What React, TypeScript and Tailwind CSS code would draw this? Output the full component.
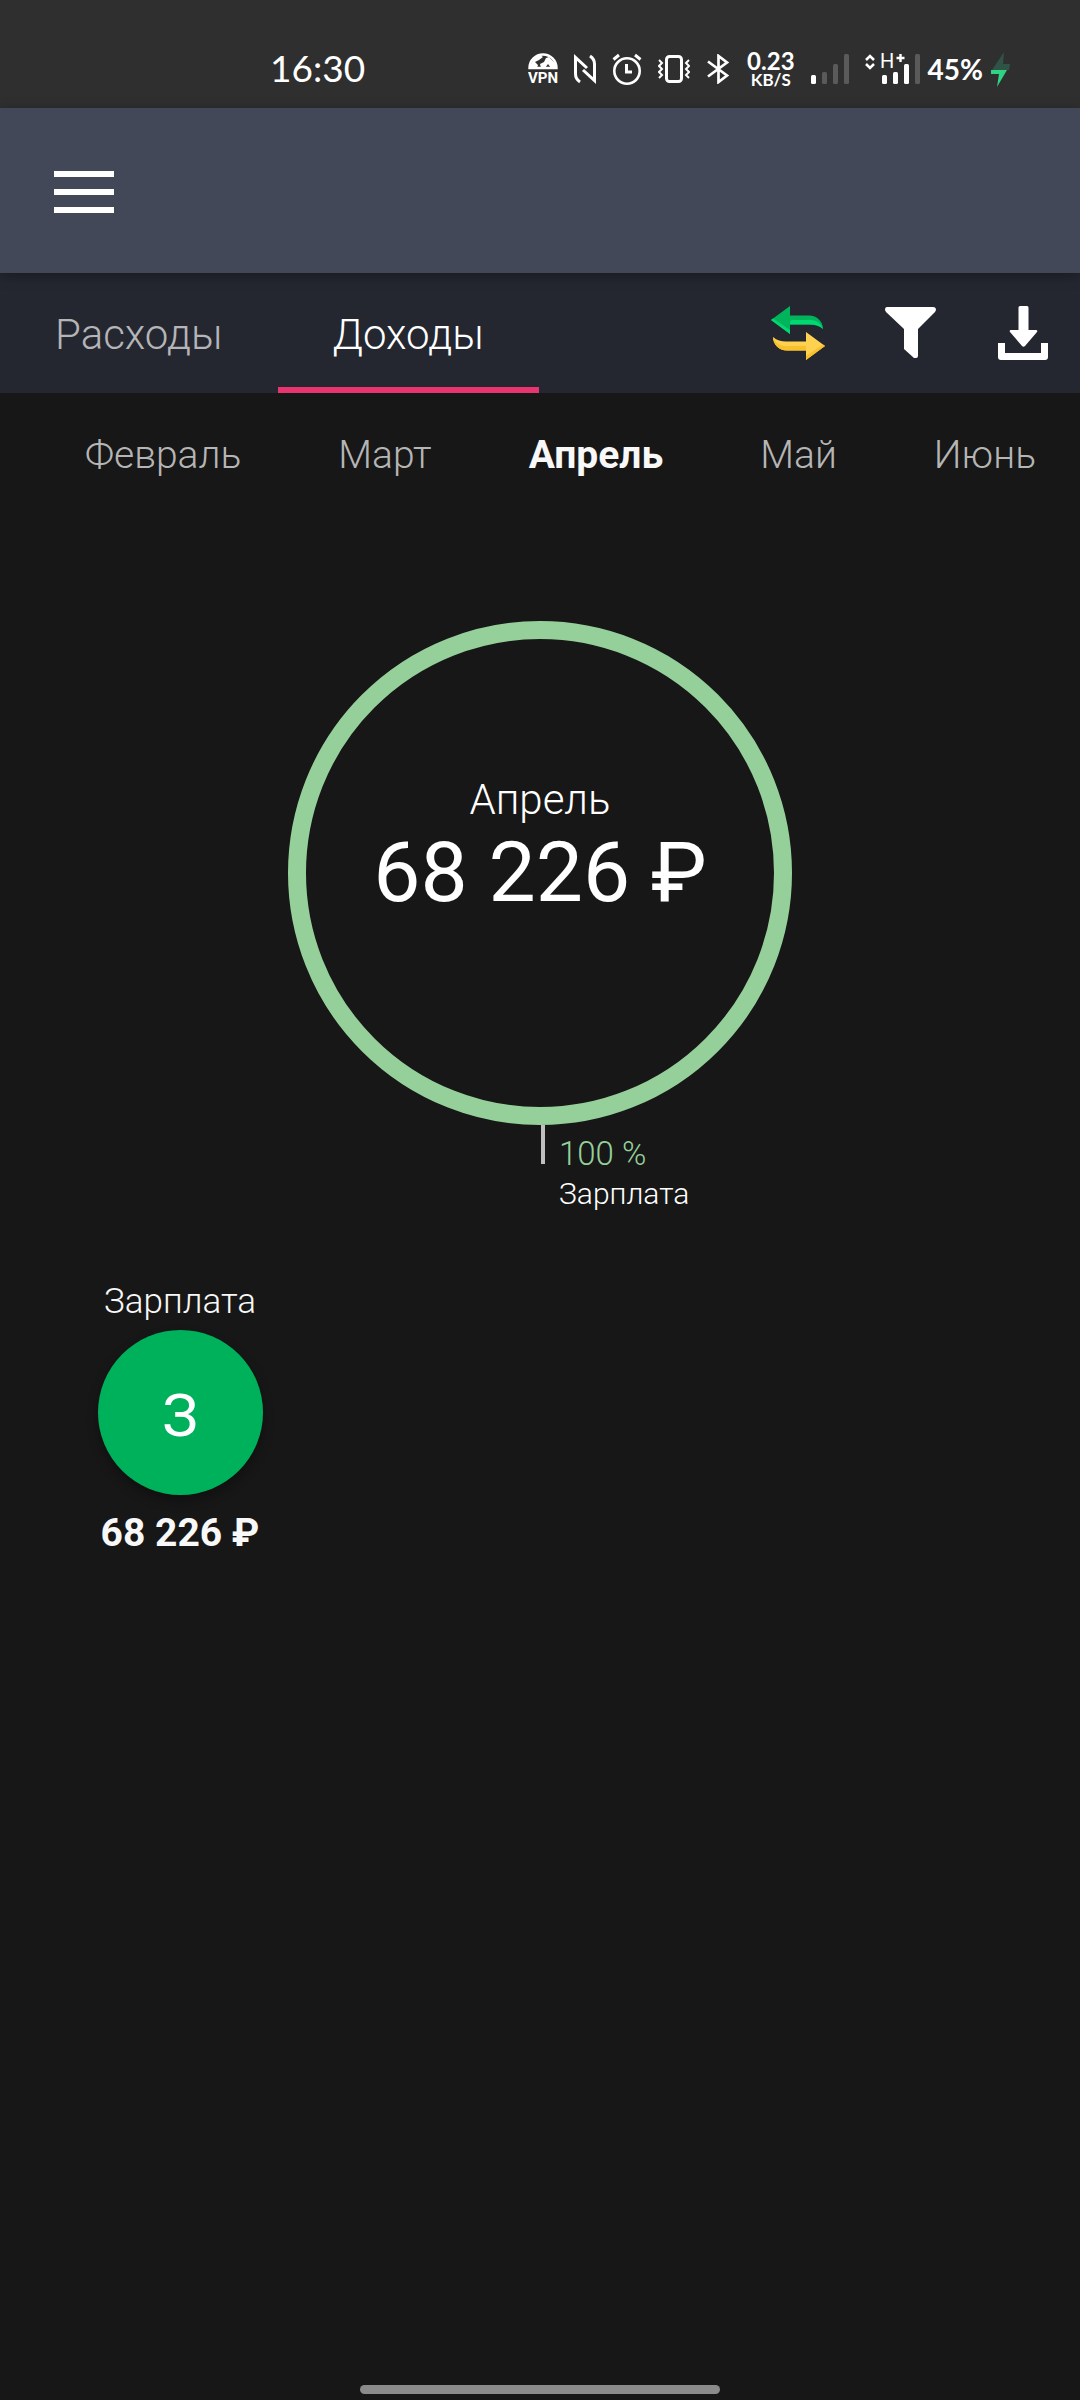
import { useState } from "react";
import clsx from "clsx";

const TABS = ["Расходы", "Доходы"];
const MONTHS = ["Февраль", "Март", "Апрель", "Май", "Июнь"];
const CATEGORIES = [{ name: "Зарплата", letter: "З", amount: "68 226 ₽" }];

function SignalBars({ active }: { active: number }) {
  const bars = [
    { x: 0, h: 9 },
    { x: 11, h: 12 },
    { x: 22, h: 20 },
    { x: 33, h: 30 },
  ];
  return (
    <>
      {bars.map((b, i) => (
        <rect key={b.x} x={b.x} y={30 - b.h} width="5" height={b.h} rx="1.5" fill={i < active ? "#fff" : "#5a5a5a"} />
      ))}
    </>
  );
}

function StatusBar() {
  return (
    <div className="flex h-[108px] items-center justify-between bg-[#2f2f2f] pt-[30px] pr-[70px] pl-[25%] font-normal text-white">
      <span className="pb-0.5 font-['Lato'] text-[37px] leading-10">16:30</span>

      <div className="flex items-center gap-4">
        {/* VPN */}
        <svg width="30" height="38" viewBox="0 -3 30 38" fill="none">
          <path d="M1.5 15a13.5 13.5 0 0 1 27 0z" stroke="#fff" strokeWidth="2.4" />
          <path d="M2 15C3 9 7 3 12 2l3 2-4 3-4 2 3 3-1 3zM13 15l-1-4 4-2 2-4 3-1 6 6 1 5h-5l-3-4-3 4z" fill="#fff" />
          <text x="15" y="30" textAnchor="middle" fill="#fff" fontFamily="Roboto" fontWeight="700" fontSize="15">VPN</text>
        </svg>
        {/* NFC */}
        <svg width="22" height="30" viewBox="0 0 22 30" fill="none" stroke="#fff" strokeWidth="3">
          <path d="M6 28Q1.500 25 1.500 20V3.500L13 14M16 2q4.500 3 4.500 8v16.500L9 16" />
        </svg>
        {/* Alarm */}
        <svg width="30" height="32" viewBox="0 0 30 32" fill="none" stroke="#fff" strokeWidth="2.600">
          <circle cx="15" cy="18" r="12.700" />
          <path d="M1.500 6.500 7 2M28.500 6.500 23 2" strokeWidth="3" />
          <path d="M14.500 11v8h5.500" strokeWidth="3" />
        </svg>
        {/* Vibration */}
        <svg width="32" height="30" viewBox="0 0 32 30" fill="none" stroke="#fff">
          <rect x="8.500" y="2.500" width="15" height="25" rx="3" strokeWidth="3" />
          <path d="m1 6 3 3-3 3 3 3-3 3 3 3-3 3M31 6l-3 3 3 3-3 3 3 3-3 3 3 3" strokeWidth="2" />
        </svg>
        {/* Bluetooth */}
        <svg width="25" height="30" viewBox="0 0 25 30" fill="none" stroke="#fff" strokeWidth="2.700">
          <path d="m2 7.500 19 14-8.500 6.500V2L21 8.500l-19 14" />
        </svg>
        <div className="flex flex-col items-center font-['Lato'] font-bold">
          <span className="text-[24px] leading-5">0.23</span>
          <span className="text-[17px] leading-[17px]">KB/S</span>
        </div>
        <svg width="38" height="30" viewBox="0 0 38 30">
          <SignalBars active={1} />
        </svg>
        <div className="flex items-center gap-2">
          <svg width="55" height="42" viewBox="0 -6 55 42">
            <path d="m1 6 4-4 4 4M1 10l4 4 4-4" fill="none" stroke="#fff" strokeWidth="2.500" />
            <g transform="translate(17 0)">
              <SignalBars active={3} />
            </g>
            <text x="15" y="14" fill="#fff" fontFamily="Roboto" fontSize="20">H</text>
            <path d="M35.500 0v8M31.500 4h8" stroke="#fff" strokeWidth="2.400" />
          </svg>
          <span className="font-['Lato'] text-[28px] leading-8 font-bold">45%</span>
          <svg width="19" height="35" viewBox="0 0 19 35">
            <path d="M13 0 1 18h17l1-6h-7z" fill="#2f5345" />
            <path d="M0 18h16L6 35l2-13H0z" fill="#2fd383" />
          </svg>
        </div>
      </div>
    </div>
  );
}

function TransferIcon() {
  return (
    <svg width="54" height="54" viewBox="0 0 54 54">
      <path d="M0 14 19 0v9.500h19c8 0 14 6 14 13.500-4-3.500-8-4.500-13-4.500H19V28z" fill="#00b45c" />
      <path d="m0 14 2-1.500L19 24v4zM19 18.500V16q0-2 2-2h19c6 0 10 4 12 9-4-3.500-8-4.500-13-4.500z" fill="#00d872" />
      <path d="M54 40 35 54v-9.500H16C8 44.500 2 38.500 2 31c4 3.500 8 4.500 13 4.500h20V26z" fill="#ffd150" />
      <path d="m54 40-19 14v-4l17-11.500zM35 44.500H16C8 44.500 2 38.500 2 31c2 5 6 9 12 9h21z" fill="#f8c12c" />
    </svg>
  );
}

function FilterIcon() {
  return (
    <svg width="54" height="54" viewBox="0 0 54 54" fill="#fff">
      <path d="M3 1h46q3 0 3 3l-1 2-17 17v27q0 2-2 2h-2L20 43V23L2 6 1 4q0-3 2-3z" />
    </svg>
  );
}

function DownloadIcon() {
  return (
    <svg width="54" height="54" viewBox="0 0 54 54" fill="#fff">
      <path d="M23 0h7q1.500 0 1.500 1.500V24H39q2 0 1 2L28 40q-1.500 1.500-3 0L13 26q-1-2 1-2h7.500V1.500Q21.500 0 23 0z" />
      <path d="M1 37h7v10h36V37h7v14q0 3-3 3H4q-3 0-3-3z" />
    </svg>
  );
}

export default function App() {
  const [tab, setTab] = useState("Доходы");
  const [month, setMonth] = useState("Апрель");

  return (
    <div className="flex min-h-screen flex-col overflow-hidden bg-[#171717] font-['Roboto',sans-serif] font-light text-white">
      <StatusBar />

      <header className="relative z-10 flex h-[165px] items-center bg-[#424858] px-[54px] shadow-[0_3px_12px_rgba(0,0,0,0.3)]">
        <button aria-label="Меню" className="flex flex-col gap-3 pt-0.5">
          <span className="h-1.5 w-[60px] bg-white" />
          <span className="h-1.5 w-[60px] bg-white" />
          <span className="h-1.5 w-[60px] bg-white" />
        </button>
      </header>

      {/* Tabs and actions */}
      <div className="flex h-[120px] items-stretch justify-between bg-[#242730]">
        <nav className="flex">
          {TABS.map((t) => (
            <button
              key={t}
              onClick={() => setTab(t)}
              className={clsx(
                "px-[55px] pt-1 text-[42px] leading-[48px]",
                t === tab ? "text-white shadow-[inset_0_-6px_0_#e8346f]" : "text-[#b5b5b8]"
              )}
            >
              {t}
            </button>
          ))}
        </nav>
        <div className="flex items-center gap-[59px] pr-[29px]">
          <button aria-label="Перевод"><TransferIcon /></button>
          <button aria-label="Фильтр"><FilterIcon /></button>
          <button aria-label="Скачать"><DownloadIcon /></button>
        </div>
      </div>

      {/* Months */}
      <div className="flex gap-[97px] py-10 pl-[85px] text-[39px] leading-[44px]">
        {MONTHS.map((m) => (
          <button
            key={m}
            onClick={() => setMonth(m)}
            className={m === month ? "font-bold text-[#f8f8f8]" : "text-[#b5b5b5]"}
          >
            {m}
          </button>
        ))}
      </div>

      {/* Chart */}
      <section className="mt-[104px]">
        <div className="mx-auto flex size-[504px] flex-col items-center justify-center rounded-full border-[18px] border-[#95d09a] pb-12">
          <span className="text-[42px] leading-[48px]">{month}</span>
          <span className="text-[84px] leading-[98px] font-normal whitespace-nowrap">68 226 ₽</span>
        </div>
        <div className="flex pl-[50%]">
          <span className="ml-px h-[39px] w-1 bg-[#bfbfc1]" />
          <div className="ml-3.5 flex flex-col pt-[9px] leading-10">
            <span className="text-[33px] text-[#95d09a]">100 %</span>
            <span className="text-[30px]">Зарплата</span>
          </div>
        </div>
      </section>

      {/* Categories */}
      <section className="mt-[66px] grid grid-cols-3">
        {CATEGORIES.map((c) => (
          <button key={c.name} className="flex flex-col items-center">
            <span className="text-[35px] leading-[44px] text-[#f8f8f8]">{c.name}</span>
            <span className="mt-1.5 flex size-[165px] items-center justify-center rounded-full bg-[#00b15c] pt-1.5 text-[60px] font-normal shadow-[0_6px_12px_rgba(0,0,0,0.3)]">
              {c.letter}
            </span>
            <span className="mt-4 text-[39px] leading-[44px] font-bold text-[#f8f8f8]">{c.amount}</span>
          </button>
        ))}
      </section>

      <div className="mt-auto flex justify-center pb-1.5">
        <div className="h-[9px] w-1/3 rounded-full bg-[#8b8b8b]" />
      </div>
    </div>
  );
}
